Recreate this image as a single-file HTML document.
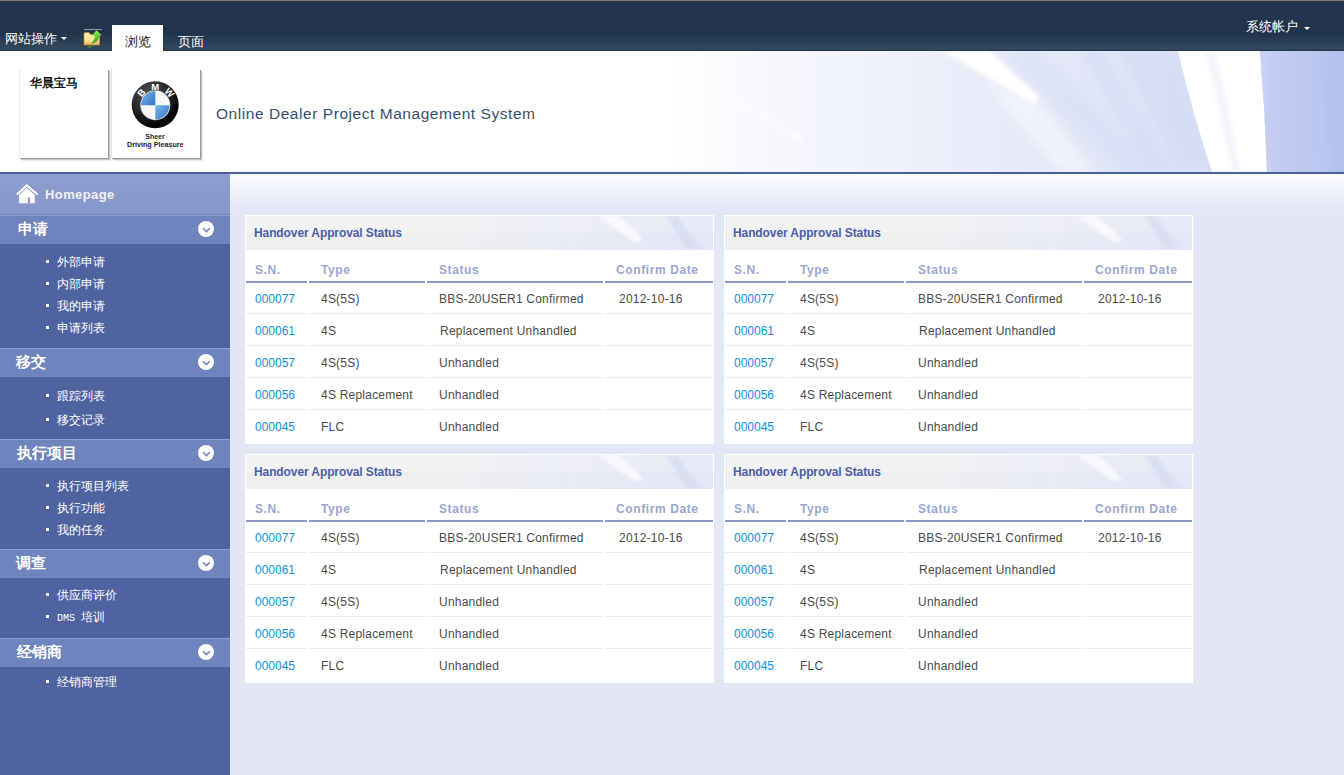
<!DOCTYPE html>
<html><head><meta charset="utf-8">
<style>
*{margin:0;padding:0;box-sizing:border-box}
html,body{width:1344px;height:775px;overflow:hidden;background:#e3e6f5;font-family:"Liberation Sans",sans-serif}
.abs{position:absolute}
#top{position:absolute;left:0;top:0;width:1344px;height:51px;background:linear-gradient(#23364d 0,#21344b 34px,#2b3f55 42px,#33485d 49px,#2a3d52 50px,#22354a 51px)}
#top .gl{position:absolute;left:0;top:0;width:1344px;height:2px;background:linear-gradient(#8a8a8a 0,#6a6a6a 1px,#2e3338 1px,#2e3338 2px)}
#banner{position:absolute;left:0;top:51px;width:1344px;height:121px;background:#fff;overflow:hidden}
#bline{position:absolute;left:0;top:172px;width:1344px;height:2px;background:#4b5fa6}
#side{position:absolute;left:0;top:174px;width:230px;height:601px;background:#4f63a0}
#content{position:absolute;left:230px;top:174px;width:1114px;height:601px;background:linear-gradient(#fafbff 0,#f6f7fd 10px,#ebeef9 24px,#e3e6f5 36px)}
#home{position:absolute;left:0;top:0;width:230px;height:41px;background:linear-gradient(#8f9ecf,#8697c9);border-bottom:1px solid #7385c0}
#home span{position:absolute;left:45px;top:13px;font-size:13px;font-weight:bold;color:#eef0f8;letter-spacing:0.4px}
.sh{position:absolute;left:0;width:230px;height:29px;background:#6f84bd;border-top:1px solid #8d9dd0}
.sh span{position:absolute;top:5px;color:#fff;font-weight:bold;font-size:14.5px;line-height:16px}
.ci{position:absolute;left:198px;top:5px;width:16px;height:16px;border-radius:50%;background:#fff}
.ci svg{position:absolute;left:0;top:0}
.it{position:absolute;left:46px;color:#fff;font-size:12px;line-height:14px;height:14px;width:150px}
.it i{position:absolute;left:0;top:5px;width:3px;height:3px;background:#fff}
.it>span{position:absolute;left:11px;top:0;white-space:nowrap}
.panel{position:absolute;width:469px;height:229px;background:#fff;border:1px solid #ffffff}
.ph{position:absolute;left:0;top:0;width:467px;height:34px;background:#efefef;overflow:hidden}
.ph b{position:absolute;left:8px;top:10px;font-size:12px;color:#4b5ea8;letter-spacing:-0.1px;white-space:nowrap}
.hd{position:absolute;top:47px;font-size:12px;font-weight:bold;color:#9ba7d0;letter-spacing:0.6px;white-space:nowrap}
.ul{position:absolute;top:65px;height:2px;background:#8b98cc}
.rl{position:absolute;height:1px;background:#ebebf1}
.c{position:absolute;font-size:12px;color:#4a4a4a;white-space:nowrap;letter-spacing:0.22px;line-height:14px}
.c.a{color:#0f8fdc;letter-spacing:0}
</style></head><body>
<div id="top"><div class="gl"></div>
<div class="abs" style="left:5px;top:31px;color:#fff;font-size:13px;line-height:15px">网站操作</div>
<div class="abs" style="left:61px;top:37px;width:0;height:0;border-left:3px solid transparent;border-right:3px solid transparent;border-top:3px solid #fff"></div>
<svg class="abs" style="left:80px;top:25px" width="26" height="26" viewBox="80 25 26 26">
<defs><linearGradient id="fo" x1="0" y1="0" x2="0" y2="1"><stop offset="0" stop-color="#fdf2b8"/><stop offset="0.7" stop-color="#f6de8e"/><stop offset="1" stop-color="#e4a94a"/></linearGradient>
<linearGradient id="ar" x1="0" y1="0" x2="0" y2="1"><stop offset="0" stop-color="#8ef050"/><stop offset="1" stop-color="#2f9e1e"/></linearGradient></defs>
<rect x="84" y="29" width="18" height="1" fill="#8e98a3"/>
<path d="M84 34 Q84 32.6 85.5 32.6 L89 32.6 L90.5 34.5 L99.5 34.5 L99.5 45 L84 45 Z" fill="url(#fo)" stroke="#c98a2e" stroke-width="0.7"/>
<path d="M91 43.5 C93.5 41 94.8 39 95 35.5 L91.8 35.5 L96.5 30.3 L102 35.5 L99.4 35.5 C99 40 96.5 43 91 43.5 Z" fill="url(#ar)"/>
<rect x="87.5" y="46.6" width="4.5" height="0.9" fill="#3fae2a"/>
</svg>
<div class="abs" style="left:112px;top:25px;width:51px;height:26px;background:#fff"></div>
<div class="abs" style="left:125px;top:34px;color:#222;font-size:13px;line-height:15px">浏览</div>
<div class="abs" style="left:178px;top:34px;color:#fff;font-size:13px;line-height:15px">页面</div>
<div class="abs" style="left:1246px;top:20px;color:#fff;font-size:12.5px;line-height:14px">系统帐户</div>
<div class="abs" style="left:1304px;top:27px;width:0;height:0;border-left:3.5px solid transparent;border-right:3.5px solid transparent;border-top:3.5px solid #fff"></div>
</div>
<div id="banner">
<svg class="abs" style="left:0;top:0" width="1344" height="121" viewBox="0 0 1344 121">
<defs>
<linearGradient id="bg1" x1="0" y1="0" x2="1344" y2="0" gradientUnits="userSpaceOnUse">
<stop offset="0.50" stop-color="#ffffff"/><stop offset="0.58" stop-color="#f6f7fd"/><stop offset="0.70" stop-color="#eceffa"/><stop offset="0.82" stop-color="#e1e6f7"/><stop offset="0.875" stop-color="#dce2f6"/>
</linearGradient>
<linearGradient id="bg2" x1="1260" y1="0" x2="1344" y2="0" gradientUnits="userSpaceOnUse">
<stop offset="0" stop-color="#c9d2f2"/><stop offset="0.15" stop-color="#c4cdf1"/><stop offset="0.6" stop-color="#bdc8ef"/><stop offset="1" stop-color="#b3bfec"/>
</linearGradient>
<filter id="bl2" x="-50%" y="-50%" width="200%" height="200%"><feGaussianBlur stdDeviation="2"/></filter>
<filter id="bl4" x="-50%" y="-50%" width="200%" height="200%"><feGaussianBlur stdDeviation="5"/></filter>
</defs>
<rect width="1344" height="121" fill="url(#bg1)"/>
<path d="M1120 0 L1180 0 Q1190 60 1230 121 L1180 121 Q1150 60 1120 0 Z" fill="#d2daf4" opacity="0.6" filter="url(#bl4)"/>
<path d="M1000 0 L1040 0 Q1100 60 1160 121 L1120 121 Q1060 60 1000 0 Z" fill="#d6ddf5" opacity="0.5" filter="url(#bl4)"/>
<path d="M985 30 L1040 52 L1095 121 L1060 121 Z" fill="#ffffff" opacity="0.45" filter="url(#bl4)"/><path d="M943 0 L990 0 L1040 47 L1033 53 Z" fill="#ffffff" filter="url(#bl2)"/><path d="M1080 0 L1100 0 L1175 121 L1150 121 Z" fill="#d4dbf5" opacity="0.6" filter="url(#bl4)"/>
<path d="M1178 0 L1260 0 Q1265 60 1267 121 L1212 121 Q1192 60 1178 0 Z" fill="#ffffff"/>
<path d="M1205 0 L1215 0 Q1230 60 1240 121 L1232 121 Q1220 60 1205 0 Z" fill="#f3f5fd" filter="url(#bl2)"/>
<path d="M1260 0 L1344 0 L1344 121 L1267 121 Q1265 60 1260 0 Z" fill="url(#bg2)"/>
<path d="M1300 0 L1318 0 Q1322 60 1330 121 L1312 121 Q1306 60 1300 0 Z" fill="#bdc8ef" opacity="0.7" filter="url(#bl2)"/>
<path d="M740 49 L806 89 L803 92 L737 52 Z" fill="#ffffff" opacity="0.6" filter="url(#bl2)"/>
</svg>
<div class="abs" style="left:19px;top:18px;width:89px;height:89px;background:#fff;border-left:1px solid #ececec;box-shadow:1px 1px 0 #9a9a9a,2px 2px 0 #c4c4c4,3px 3px 1px #ececec"></div>
<div class="abs" style="left:111px;top:18px;width:89px;height:89px;background:#fff;border-left:1px solid #e2e2e2;box-shadow:1px 1px 0 #9a9a9a,2px 2px 0 #c4c4c4,3px 3px 1px #ececec"></div>
<div class="abs" style="left:30px;top:25px;color:#111;font-size:11.5px;font-weight:bold;line-height:14px">华晨宝马</div>
<svg class="abs" style="left:125px;top:24px" width="60" height="75" viewBox="125 75 60 75">
<defs>
<radialGradient id="ring" cx="150" cy="95" r="30" gradientUnits="userSpaceOnUse"><stop offset="0" stop-color="#555"/><stop offset="0.6" stop-color="#2a2a2a"/><stop offset="1" stop-color="#050505"/></radialGradient>
<linearGradient id="blu" x1="0" y1="0" x2="1" y2="1"><stop offset="0" stop-color="#7fb6ea"/><stop offset="1" stop-color="#2f74c4"/></linearGradient>
</defs>
<circle cx="155.2" cy="104.8" r="23.5" fill="url(#ring)"/>
<circle cx="155.3" cy="105.2" r="15" fill="#cfd6de"/>
<circle cx="155.3" cy="105.2" r="14.2" fill="#f4f6f8"/>
<path d="M155.3 105.2 L155.3 91 A14.2 14.2 0 0 0 141.1 105.2 Z" fill="url(#blu)"/>
<path d="M155.3 105.2 L155.3 119.4 A14.2 14.2 0 0 0 169.5 105.2 Z" fill="url(#blu)"/>
<text x="0" y="0" font-family="Liberation Sans" font-weight="bold" font-size="9.5" fill="#fff" text-anchor="middle" dominant-baseline="central" transform="translate(155.2,86.6)">M</text>
<text x="0" y="0" font-family="Liberation Sans" font-weight="bold" font-size="9.5" fill="#fff" text-anchor="middle" dominant-baseline="central" transform="translate(141.2,92.6) rotate(-48)">B</text>
<text x="0" y="0" font-family="Liberation Sans" font-weight="bold" font-size="9.5" fill="#fff" text-anchor="middle" dominant-baseline="central" transform="translate(169.6,92.4) rotate(48)">W</text>
<text x="155" y="139" font-family="Liberation Sans" font-weight="bold" font-size="7" fill="#222" text-anchor="middle">Sheer</text>
<text x="155.3" y="147" font-family="Liberation Sans" font-weight="bold" font-size="7" fill="#222" text-anchor="middle" textLength="56.5" lengthAdjust="spacingAndGlyphs">Driving Pleasure</text>
</svg>
<div class="abs" style="left:216px;top:54px;color:#34506f;font-size:15.5px;line-height:18px;letter-spacing:0.55px">Online Dealer Project Management System</div>
</div>
<div id="bline"></div>
<div id="side">
<div id="home"><svg class="abs" style="left:12px;top:6px" width="30" height="26" viewBox="0 0 30 26"><path d="M7 15 L14.8 8 L22.8 15 V23.2 H7 Z" fill="#fff"/><rect x="15.8" y="17.5" width="2.3" height="5.8" fill="#8a9acb"/><path d="M5 14.6 L14.8 5.4 L25.5 14.6" fill="none" stroke="#fff" stroke-width="2"/></svg><span>Homepage</span></div>
<div class="sh" style="top:41px"><span style="left:18px">申请</span><div class="ci"><svg width="16" height="16" viewBox="0 0 16 16"><path d="M4 7.2 L8.4 11.8 L12.9 7.2 L10.7 7.2 L8.4 9.5 L6.2 7.2 Z" fill="#6f84bd"/></svg></div></div>
<div class="it" style="top:81px"><i></i><span>外部申请</span></div>
<div class="it" style="top:103px"><i></i><span>内部申请</span></div>
<div class="it" style="top:125px"><i></i><span>我的申请</span></div>
<div class="it" style="top:147px"><i></i><span>申请列表</span></div>
<div class="sh" style="top:174px"><span style="left:16px">移交</span><div class="ci"><svg width="16" height="16" viewBox="0 0 16 16"><path d="M4 7.2 L8.4 11.8 L12.9 7.2 L10.7 7.2 L8.4 9.5 L6.2 7.2 Z" fill="#6f84bd"/></svg></div></div>
<div class="it" style="top:215px"><i></i><span>跟踪列表</span></div>
<div class="it" style="top:239px"><i></i><span>移交记录</span></div>
<div class="sh" style="top:265px"><span style="left:17px">执行项目</span><div class="ci"><svg width="16" height="16" viewBox="0 0 16 16"><path d="M4 7.2 L8.4 11.8 L12.9 7.2 L10.7 7.2 L8.4 9.5 L6.2 7.2 Z" fill="#6f84bd"/></svg></div></div>
<div class="it" style="top:305px"><i></i><span>执行项目列表</span></div>
<div class="it" style="top:327px"><i></i><span>执行功能</span></div>
<div class="it" style="top:349px"><i></i><span>我的任务</span></div>
<div class="sh" style="top:375px"><span style="left:16px">调查</span><div class="ci"><svg width="16" height="16" viewBox="0 0 16 16"><path d="M4 7.2 L8.4 11.8 L12.9 7.2 L10.7 7.2 L8.4 9.5 L6.2 7.2 Z" fill="#6f84bd"/></svg></div></div>
<div class="it" style="top:414px"><i></i><span>供应商评价</span></div>
<div class="it" style="top:436px"><i></i><span><span style="font-family:'Liberation Mono',monospace;font-size:10px">DMS </span>培训</span></div>
<div class="sh" style="top:464px"><span style="left:17px">经销商</span><div class="ci"><svg width="16" height="16" viewBox="0 0 16 16"><path d="M4 7.2 L8.4 11.8 L12.9 7.2 L10.7 7.2 L8.4 9.5 L6.2 7.2 Z" fill="#6f84bd"/></svg></div></div>
<div class="it" style="top:501px"><i></i><span>经销商管理</span></div>
</div>
<div id="content"></div>
<div class="panel" style="left:245px;top:215px">
<div class="ph"><svg class="abs" style="left:0;top:0" width="467" height="34" viewBox="0 0 467 34"><defs><linearGradient id="pg" x1="0" y1="0" x2="467" y2="0" gradientUnits="userSpaceOnUse"><stop offset="0" stop-color="#efefef"/><stop offset="0.45" stop-color="#efeff1"/><stop offset="0.7" stop-color="#e9ebf5"/><stop offset="1" stop-color="#e2e6f6"/></linearGradient><filter id="pb"><feGaussianBlur stdDeviation="1.5"/></filter></defs><rect width="467" height="34" fill="url(#pg)"/><rect width="467" height="17" fill="#fff" opacity="0.18"/><path d="M352 0 L372 0 L398 24 L388 26 Z" fill="#fff" opacity="0.7" filter="url(#pb)"/><path d="M420 0 L432 0 L455 34 L440 34 Z" fill="#d5dcf3" opacity="0.7" filter="url(#pb)"/></svg><b>Handover Approval Status</b></div>
<div class="hd" style="left:9px">S.N.</div>
<div class="ul" style="left:0px;width:61px"></div>
<div class="hd" style="left:75px">Type</div>
<div class="ul" style="left:63px;width:116px"></div>
<div class="hd" style="left:193px">Status</div>
<div class="ul" style="left:181px;width:176px"></div>
<div class="hd" style="left:370px">Confirm Date</div>
<div class="ul" style="left:359px;width:108px"></div>
<div class="c a" style="left:9px;top:76px">000077</div>
<div class="rl" style="left:0px;top:97px;width:61px"></div>
<div class="c" style="left:75px;top:76px">4S(5S)</div>
<div class="rl" style="left:63px;top:97px;width:116px"></div>
<div class="c" style="left:193px;top:76px">BBS-20USER1 Confirmed</div>
<div class="rl" style="left:181px;top:97px;width:176px"></div>
<div class="c" style="left:373px;top:76px">2012-10-16</div>
<div class="rl" style="left:359px;top:97px;width:108px"></div>
<div class="c a" style="left:9px;top:108px">000061</div>
<div class="rl" style="left:0px;top:129px;width:61px"></div>
<div class="c" style="left:75px;top:108px">4S</div>
<div class="rl" style="left:63px;top:129px;width:116px"></div>
<div class="c" style="left:194px;top:108px">Replacement Unhandled</div>
<div class="rl" style="left:181px;top:129px;width:176px"></div>
<div class="rl" style="left:359px;top:129px;width:108px"></div>
<div class="c a" style="left:9px;top:140px">000057</div>
<div class="rl" style="left:0px;top:161px;width:61px"></div>
<div class="c" style="left:75px;top:140px">4S(5S)</div>
<div class="rl" style="left:63px;top:161px;width:116px"></div>
<div class="c" style="left:193px;top:140px">Unhandled</div>
<div class="rl" style="left:181px;top:161px;width:176px"></div>
<div class="rl" style="left:359px;top:161px;width:108px"></div>
<div class="c a" style="left:9px;top:172px">000056</div>
<div class="rl" style="left:0px;top:193px;width:61px"></div>
<div class="c" style="left:75px;top:172px">4S Replacement</div>
<div class="rl" style="left:63px;top:193px;width:116px"></div>
<div class="c" style="left:193px;top:172px">Unhandled</div>
<div class="rl" style="left:181px;top:193px;width:176px"></div>
<div class="rl" style="left:359px;top:193px;width:108px"></div>
<div class="c a" style="left:9px;top:204px">000045</div>
<div class="c" style="left:75px;top:204px">FLC</div>
<div class="c" style="left:193px;top:204px">Unhandled</div>
</div>
<div class="panel" style="left:724px;top:215px">
<div class="ph"><svg class="abs" style="left:0;top:0" width="467" height="34" viewBox="0 0 467 34"><defs><linearGradient id="pg" x1="0" y1="0" x2="467" y2="0" gradientUnits="userSpaceOnUse"><stop offset="0" stop-color="#efefef"/><stop offset="0.45" stop-color="#efeff1"/><stop offset="0.7" stop-color="#e9ebf5"/><stop offset="1" stop-color="#e2e6f6"/></linearGradient><filter id="pb"><feGaussianBlur stdDeviation="1.5"/></filter></defs><rect width="467" height="34" fill="url(#pg)"/><rect width="467" height="17" fill="#fff" opacity="0.18"/><path d="M352 0 L372 0 L398 24 L388 26 Z" fill="#fff" opacity="0.7" filter="url(#pb)"/><path d="M420 0 L432 0 L455 34 L440 34 Z" fill="#d5dcf3" opacity="0.7" filter="url(#pb)"/></svg><b>Handover Approval Status</b></div>
<div class="hd" style="left:9px">S.N.</div>
<div class="ul" style="left:0px;width:61px"></div>
<div class="hd" style="left:75px">Type</div>
<div class="ul" style="left:63px;width:116px"></div>
<div class="hd" style="left:193px">Status</div>
<div class="ul" style="left:181px;width:176px"></div>
<div class="hd" style="left:370px">Confirm Date</div>
<div class="ul" style="left:359px;width:108px"></div>
<div class="c a" style="left:9px;top:76px">000077</div>
<div class="rl" style="left:0px;top:97px;width:61px"></div>
<div class="c" style="left:75px;top:76px">4S(5S)</div>
<div class="rl" style="left:63px;top:97px;width:116px"></div>
<div class="c" style="left:193px;top:76px">BBS-20USER1 Confirmed</div>
<div class="rl" style="left:181px;top:97px;width:176px"></div>
<div class="c" style="left:373px;top:76px">2012-10-16</div>
<div class="rl" style="left:359px;top:97px;width:108px"></div>
<div class="c a" style="left:9px;top:108px">000061</div>
<div class="rl" style="left:0px;top:129px;width:61px"></div>
<div class="c" style="left:75px;top:108px">4S</div>
<div class="rl" style="left:63px;top:129px;width:116px"></div>
<div class="c" style="left:194px;top:108px">Replacement Unhandled</div>
<div class="rl" style="left:181px;top:129px;width:176px"></div>
<div class="rl" style="left:359px;top:129px;width:108px"></div>
<div class="c a" style="left:9px;top:140px">000057</div>
<div class="rl" style="left:0px;top:161px;width:61px"></div>
<div class="c" style="left:75px;top:140px">4S(5S)</div>
<div class="rl" style="left:63px;top:161px;width:116px"></div>
<div class="c" style="left:193px;top:140px">Unhandled</div>
<div class="rl" style="left:181px;top:161px;width:176px"></div>
<div class="rl" style="left:359px;top:161px;width:108px"></div>
<div class="c a" style="left:9px;top:172px">000056</div>
<div class="rl" style="left:0px;top:193px;width:61px"></div>
<div class="c" style="left:75px;top:172px">4S Replacement</div>
<div class="rl" style="left:63px;top:193px;width:116px"></div>
<div class="c" style="left:193px;top:172px">Unhandled</div>
<div class="rl" style="left:181px;top:193px;width:176px"></div>
<div class="rl" style="left:359px;top:193px;width:108px"></div>
<div class="c a" style="left:9px;top:204px">000045</div>
<div class="c" style="left:75px;top:204px">FLC</div>
<div class="c" style="left:193px;top:204px">Unhandled</div>
</div>
<div class="panel" style="left:245px;top:454px">
<div class="ph"><svg class="abs" style="left:0;top:0" width="467" height="34" viewBox="0 0 467 34"><defs><linearGradient id="pg" x1="0" y1="0" x2="467" y2="0" gradientUnits="userSpaceOnUse"><stop offset="0" stop-color="#efefef"/><stop offset="0.45" stop-color="#efeff1"/><stop offset="0.7" stop-color="#e9ebf5"/><stop offset="1" stop-color="#e2e6f6"/></linearGradient><filter id="pb"><feGaussianBlur stdDeviation="1.5"/></filter></defs><rect width="467" height="34" fill="url(#pg)"/><rect width="467" height="17" fill="#fff" opacity="0.18"/><path d="M352 0 L372 0 L398 24 L388 26 Z" fill="#fff" opacity="0.7" filter="url(#pb)"/><path d="M420 0 L432 0 L455 34 L440 34 Z" fill="#d5dcf3" opacity="0.7" filter="url(#pb)"/></svg><b>Handover Approval Status</b></div>
<div class="hd" style="left:9px">S.N.</div>
<div class="ul" style="left:0px;width:61px"></div>
<div class="hd" style="left:75px">Type</div>
<div class="ul" style="left:63px;width:116px"></div>
<div class="hd" style="left:193px">Status</div>
<div class="ul" style="left:181px;width:176px"></div>
<div class="hd" style="left:370px">Confirm Date</div>
<div class="ul" style="left:359px;width:108px"></div>
<div class="c a" style="left:9px;top:76px">000077</div>
<div class="rl" style="left:0px;top:97px;width:61px"></div>
<div class="c" style="left:75px;top:76px">4S(5S)</div>
<div class="rl" style="left:63px;top:97px;width:116px"></div>
<div class="c" style="left:193px;top:76px">BBS-20USER1 Confirmed</div>
<div class="rl" style="left:181px;top:97px;width:176px"></div>
<div class="c" style="left:373px;top:76px">2012-10-16</div>
<div class="rl" style="left:359px;top:97px;width:108px"></div>
<div class="c a" style="left:9px;top:108px">000061</div>
<div class="rl" style="left:0px;top:129px;width:61px"></div>
<div class="c" style="left:75px;top:108px">4S</div>
<div class="rl" style="left:63px;top:129px;width:116px"></div>
<div class="c" style="left:194px;top:108px">Replacement Unhandled</div>
<div class="rl" style="left:181px;top:129px;width:176px"></div>
<div class="rl" style="left:359px;top:129px;width:108px"></div>
<div class="c a" style="left:9px;top:140px">000057</div>
<div class="rl" style="left:0px;top:161px;width:61px"></div>
<div class="c" style="left:75px;top:140px">4S(5S)</div>
<div class="rl" style="left:63px;top:161px;width:116px"></div>
<div class="c" style="left:193px;top:140px">Unhandled</div>
<div class="rl" style="left:181px;top:161px;width:176px"></div>
<div class="rl" style="left:359px;top:161px;width:108px"></div>
<div class="c a" style="left:9px;top:172px">000056</div>
<div class="rl" style="left:0px;top:193px;width:61px"></div>
<div class="c" style="left:75px;top:172px">4S Replacement</div>
<div class="rl" style="left:63px;top:193px;width:116px"></div>
<div class="c" style="left:193px;top:172px">Unhandled</div>
<div class="rl" style="left:181px;top:193px;width:176px"></div>
<div class="rl" style="left:359px;top:193px;width:108px"></div>
<div class="c a" style="left:9px;top:204px">000045</div>
<div class="c" style="left:75px;top:204px">FLC</div>
<div class="c" style="left:193px;top:204px">Unhandled</div>
</div>
<div class="panel" style="left:724px;top:454px">
<div class="ph"><svg class="abs" style="left:0;top:0" width="467" height="34" viewBox="0 0 467 34"><defs><linearGradient id="pg" x1="0" y1="0" x2="467" y2="0" gradientUnits="userSpaceOnUse"><stop offset="0" stop-color="#efefef"/><stop offset="0.45" stop-color="#efeff1"/><stop offset="0.7" stop-color="#e9ebf5"/><stop offset="1" stop-color="#e2e6f6"/></linearGradient><filter id="pb"><feGaussianBlur stdDeviation="1.5"/></filter></defs><rect width="467" height="34" fill="url(#pg)"/><rect width="467" height="17" fill="#fff" opacity="0.18"/><path d="M352 0 L372 0 L398 24 L388 26 Z" fill="#fff" opacity="0.7" filter="url(#pb)"/><path d="M420 0 L432 0 L455 34 L440 34 Z" fill="#d5dcf3" opacity="0.7" filter="url(#pb)"/></svg><b>Handover Approval Status</b></div>
<div class="hd" style="left:9px">S.N.</div>
<div class="ul" style="left:0px;width:61px"></div>
<div class="hd" style="left:75px">Type</div>
<div class="ul" style="left:63px;width:116px"></div>
<div class="hd" style="left:193px">Status</div>
<div class="ul" style="left:181px;width:176px"></div>
<div class="hd" style="left:370px">Confirm Date</div>
<div class="ul" style="left:359px;width:108px"></div>
<div class="c a" style="left:9px;top:76px">000077</div>
<div class="rl" style="left:0px;top:97px;width:61px"></div>
<div class="c" style="left:75px;top:76px">4S(5S)</div>
<div class="rl" style="left:63px;top:97px;width:116px"></div>
<div class="c" style="left:193px;top:76px">BBS-20USER1 Confirmed</div>
<div class="rl" style="left:181px;top:97px;width:176px"></div>
<div class="c" style="left:373px;top:76px">2012-10-16</div>
<div class="rl" style="left:359px;top:97px;width:108px"></div>
<div class="c a" style="left:9px;top:108px">000061</div>
<div class="rl" style="left:0px;top:129px;width:61px"></div>
<div class="c" style="left:75px;top:108px">4S</div>
<div class="rl" style="left:63px;top:129px;width:116px"></div>
<div class="c" style="left:194px;top:108px">Replacement Unhandled</div>
<div class="rl" style="left:181px;top:129px;width:176px"></div>
<div class="rl" style="left:359px;top:129px;width:108px"></div>
<div class="c a" style="left:9px;top:140px">000057</div>
<div class="rl" style="left:0px;top:161px;width:61px"></div>
<div class="c" style="left:75px;top:140px">4S(5S)</div>
<div class="rl" style="left:63px;top:161px;width:116px"></div>
<div class="c" style="left:193px;top:140px">Unhandled</div>
<div class="rl" style="left:181px;top:161px;width:176px"></div>
<div class="rl" style="left:359px;top:161px;width:108px"></div>
<div class="c a" style="left:9px;top:172px">000056</div>
<div class="rl" style="left:0px;top:193px;width:61px"></div>
<div class="c" style="left:75px;top:172px">4S Replacement</div>
<div class="rl" style="left:63px;top:193px;width:116px"></div>
<div class="c" style="left:193px;top:172px">Unhandled</div>
<div class="rl" style="left:181px;top:193px;width:176px"></div>
<div class="rl" style="left:359px;top:193px;width:108px"></div>
<div class="c a" style="left:9px;top:204px">000045</div>
<div class="c" style="left:75px;top:204px">FLC</div>
<div class="c" style="left:193px;top:204px">Unhandled</div>
</div>
</body></html>
